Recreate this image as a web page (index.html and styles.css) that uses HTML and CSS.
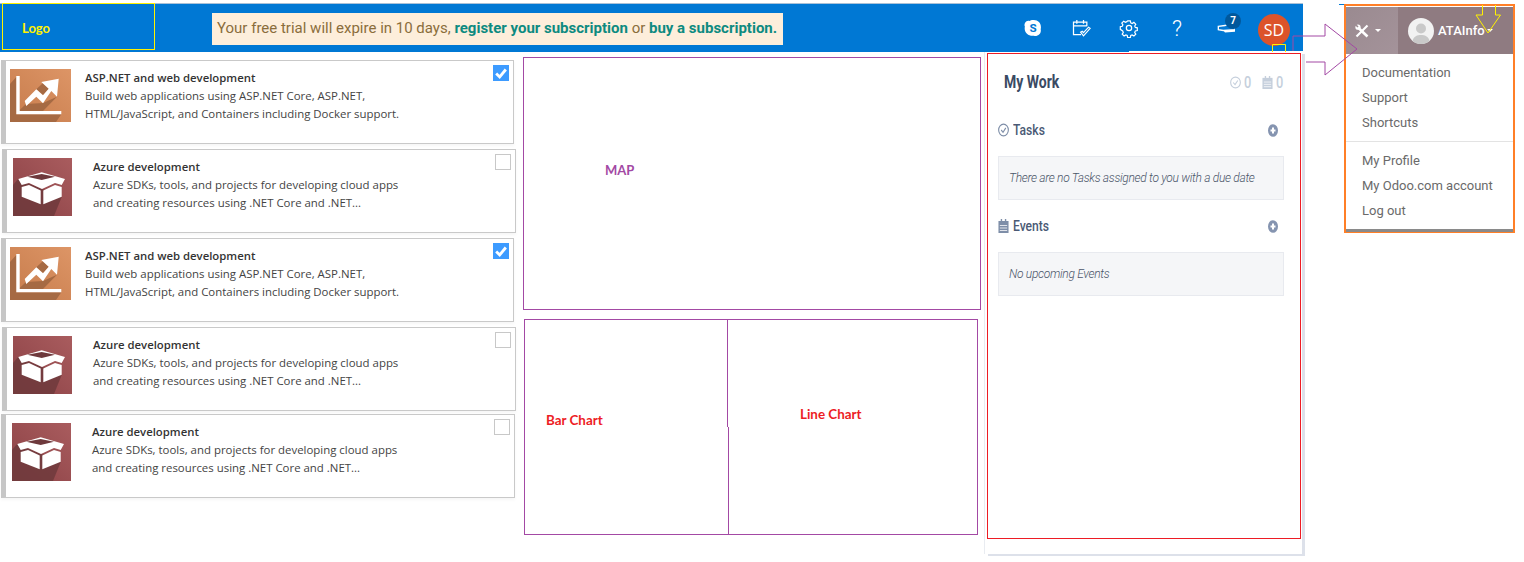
FILE: index.html
```html
<!DOCTYPE html>
<html lang="en">
<head>
<meta charset="utf-8">
<title>Dashboard mockup</title>
<link rel="stylesheet" href="styles.css">
</head>
<body>
<svg class="defs" width="0" height="0" aria-hidden="true">
  <defs>
    <linearGradient id="orangeTile" x1="1" y1="0" x2="0" y2="1">
      <stop offset="0" stop-color="#dd9566"/><stop offset="1" stop-color="#c67b4b"/>
    </linearGradient>
    <linearGradient id="redTile" x1="1" y1="0" x2="0" y2="1">
      <stop offset="0" stop-color="#a95c5e"/><stop offset="1" stop-color="#8b4145"/>
    </linearGradient>
    <symbol id="chartTile" viewBox="0 0 61 53">
      <rect width="61" height="53" fill="url(#orangeTile)"/>
      <path d="M6.300 8L0 15V53H46L51.300 45.300H6.300z" fill="#a66a43"/>
      <path d="M9.700 42V41L16 35L33 34L47 27.700L33 42z" fill="#a66a43"/>
      <path d="M26.300 20.300L33 14L38.700 19.700L33 26.300z" fill="#a66a43"/>
      <path d="M6.300 7H9.700V42H51.300V45.300H6.300z" fill="#fff"/>
      <path d="M16.300 37L14.700 32L26.300 20.300L33 26.300L38.700 19.700L31.300 13L48.700 9.700L47 27.700L41.300 22L33 34.300L26.300 27.700z" fill="#fff"/>
    </symbol>
    <symbol id="boxTile" viewBox="0 0 59 58">
      <rect width="59" height="58" fill="url(#redTile)"/>
      <path d="M5 21L0 27V58H41L48.700 39z" fill="#6e393c" opacity=".85"/>
      <path d="M5.300 21L28.700 14.300L52 21L48.700 27L42 25L29 31L16 25L8.700 27z" fill="#fff"/>
      <path d="M14.300 18.700L28.700 16L42 18.700L28.700 22z" fill="#6e393c"/>
      <path d="M8.700 29L16 27L27.700 32.500V46.300L8.700 38.700z" fill="#fff"/>
      <path d="M48.700 29L42 27L30.300 32.500V46.300L48.700 38.700z" fill="#fff"/>
    </symbol>
  </defs>
</svg>

<div class="page">
  <div class="main">
    <header class="topbar">
      <div class="logo">Logo</div>
      <div class="trial">Your free trial will expire in 10 days, <a class="trial-link">register your subscription</a> or <a class="trial-link">buy a subscription.</a></div>
      <nav class="tray">
        <svg class="tray-icon" viewBox="0 0 24 24">
          <path d="M8 3.500c1-.8 2-1 3-1h2c5 0 8.500 3.500 8.500 8.500 0 1 0 1.500-.3 2.300 1 3.700-1.200 7.700-5.200 8.200-1.500.2-2 0-3-.3-5.500 1-11-3-11-8.700 0-1 0-1.500.3-2C.5 6.500 4 2 8 3.500z" fill="#fff"/>
          <text class="skype-s" x="12" y="17">S</text>
        </svg>
        <svg class="tray-icon" viewBox="0 0 24 24" fill="none" stroke="#fff" stroke-width="1.500">
          <path d="M12 20H3V5h16v5M3 9.500h16M7 2.500v4.500M15 2.500v4.500"/>
          <path d="M11.500 17l3.500 4.500 8-9-2-1.500-6 6.500-1.500-1.500z" stroke-width="1.400"/>
        </svg>
        <svg class="tray-icon" viewBox="0 0 24 24" fill="none" stroke="#fff" stroke-width="1.500">
          <circle cx="12" cy="12" r="3.200"/>
          <path d="M10.300 3h3.400l.5 2.500 1.800.8 2.200-1.400 2.400 2.400-1.400 2.200.8 1.800 2.500.5v3.400l-2.500.5-.8 1.800 1.400 2.200-2.400 2.400-2.200-1.400-1.800.8-.5 2.500h-3.400l-.5-2.500-1.800-.8-2.200 1.400-2.400-2.400 1.400-2.200-.8-1.800L1 13.700v-3.400l2.500-.5.8-1.800-1.400-2.200 2.400-2.400 2.200 1.400 1.800-.8z" transform="translate(.6 .6) scale(.95)"/>
        </svg>
        <span class="tray-help">?</span>
        <span class="tray-notice">
          <svg class="tray-icon" viewBox="0 0 24 24" fill="none" stroke="#fff" stroke-width="1.600">
            <path d="M4 10L12 9L24 4V14L10 15L4 14z"/>
            <path d="M10 15L12 17.400L24 16.500V14z" fill="#fff" stroke="none"/>
          </svg>
          <span class="badge">7</span>
        </span>
        <span class="avatar">SD</span>
      </nav>
    </header>

    <div class="content">
      <section class="cards">
        <article class="card card-a">
          <svg class="tile tile-chart"><use href="#chartTile"/></svg>
          <div class="card-text text-chart">
            <h3 class="card-title">ASP.NET and web development</h3>
            <p class="card-desc">Build web applications using ASP.NET Core, ASP.NET,<br>HTML/JavaScript, and Containers including Docker support.</p>
          </div>
          <span class="check check-on"><svg viewBox="0 0 16 16"><path d="M2.500 8.500l4 4L13.500 4" fill="none" stroke="#fff" stroke-width="3.200"/></svg></span>
        </article>
        <article class="card card-b">
          <svg class="tile tile-box"><use href="#boxTile"/></svg>
          <div class="card-text text-box">
            <h3 class="card-title">Azure development</h3>
            <p class="card-desc">Azure SDKs, tools, and projects for developing cloud apps<br>and creating resources using .NET Core and .NET...</p>
          </div>
          <span class="check"></span>
        </article>
        <article class="card card-a">
          <svg class="tile tile-chart"><use href="#chartTile"/></svg>
          <div class="card-text text-chart">
            <h3 class="card-title">ASP.NET and web development</h3>
            <p class="card-desc">Build web applications using ASP.NET Core, ASP.NET,<br>HTML/JavaScript, and Containers including Docker support.</p>
          </div>
          <span class="check check-on"><svg viewBox="0 0 16 16"><path d="M2.500 8.500l4 4L13.500 4" fill="none" stroke="#fff" stroke-width="3.200"/></svg></span>
        </article>
        <article class="card card-b">
          <svg class="tile tile-box"><use href="#boxTile"/></svg>
          <div class="card-text text-box">
            <h3 class="card-title">Azure development</h3>
            <p class="card-desc">Azure SDKs, tools, and projects for developing cloud apps<br>and creating resources using .NET Core and .NET...</p>
          </div>
          <span class="check"></span>
        </article>
        <article class="card card-c">
          <svg class="tile tile-box"><use href="#boxTile"/></svg>
          <div class="card-text text-box">
            <h3 class="card-title">Azure development</h3>
            <p class="card-desc">Azure SDKs, tools, and projects for developing cloud apps<br>and creating resources using .NET Core and .NET...</p>
          </div>
          <span class="check"></span>
        </article>
      </section>

      <section class="centre">
        <div class="map"><span class="map-label">MAP</span></div>
        <div class="charts">
          <div class="chart-bar"><span class="bar-label">Bar Chart</span></div>
          <div class="chart-line"><span class="line-label">Line Chart</span></div>
        </div>
      </section>

      <aside class="work-panel">
        <div class="work-frame">
          <div class="work-head">
            <h2 class="work-title">My Work</h2>
            <div class="work-counts">
              <svg class="count-icon" viewBox="0 0 12 14" preserveAspectRatio="none" fill="none" stroke="#c5cfdc" stroke-width="1.200"><ellipse cx="6" cy="7" rx="5.300" ry="5.800"/><path d="M3.500 7l2 2.300 3-4.500"/></svg>
              <span class="count">0</span>
              <svg class="count-icon count-gap" viewBox="0 0 12 14" preserveAspectRatio="none"><path d="M0.500 2h11v12H0.500z" fill="#c5cfdc"/><path d="M3 0h1.500V3H3zM7.500 0H9V3H7.500z" fill="#c5cfdc"/><path d="M2 6.500h8M2 9h8M2 11.500h8" stroke="#fff" stroke-width=".8"/></svg>
              <span class="count">0</span>
            </div>
          </div>
          <div class="work-section work-tasks">
            <svg class="sec-icon" viewBox="0 0 12 14" preserveAspectRatio="none" fill="none" stroke="#7e8ea8" stroke-width="1.200"><ellipse cx="6" cy="7" rx="5.300" ry="5.800"/><path d="M3.500 7l2 2.300 3-4.500"/></svg>
            <h3 class="sec-title">Tasks</h3>
            <svg class="sec-add" viewBox="0 0 10 13" preserveAspectRatio="none"><ellipse cx="5" cy="6.500" rx="5" ry="6.300" fill="#8594b0"/><path d="M5 3.500v6M2.500 6.500h5" stroke="#fff" stroke-width="2"/></svg>
          </div>
          <div class="work-empty">There are no Tasks assigned to you with a due date</div>
          <div class="work-section work-events">
            <svg class="sec-icon" viewBox="0 0 12 14" preserveAspectRatio="none"><path d="M0.500 2h11v12H0.500z" fill="#7e8ea8"/><path d="M3 0h1.500V3H3zM7.500 0H9V3H7.500z" fill="#7e8ea8"/><path d="M2 6.500h8M2 9h8M2 11.500h8" stroke="#fff" stroke-width=".8"/></svg>
            <h3 class="sec-title">Events</h3>
            <svg class="sec-add" viewBox="0 0 10 13" preserveAspectRatio="none"><ellipse cx="5" cy="6.500" rx="5" ry="6.300" fill="#8594b0"/><path d="M5 3.500v6M2.500 6.500h5" stroke="#fff" stroke-width="2"/></svg>
          </div>
          <div class="work-empty">No upcoming Events</div>
        </div>
      </aside>
    </div>
  </div>

  <aside class="user-menu">
    <div class="menu-head">
      <div class="menu-tools">
        <svg class="tools-icon" viewBox="0 0 14 14" fill="none" stroke="#fff">
          <path d="M3.500 4L12.500 12.500" stroke-width="2.600"/>
          <path d="M12.500 1.500L1.500 12.500" stroke-width="2.200"/>
          <circle cx="3" cy="3.200" r="2.600" fill="#fff" stroke="none"/>
          <path d="M0.500 0.500L3 3" stroke="#9b8b91" stroke-width="1.600"/>
        </svg>
        <span class="caret"></span>
      </div>
      <div class="menu-user">
        <svg class="user-pic" viewBox="0 0 26 26">
          <circle cx="13" cy="13" r="13" fill="#f2f2f2"/>
          <circle cx="13" cy="10.500" r="5" fill="#c9c9c9"/>
          <path d="M4.500 23c1-5 5-6 8.500-6s7.500 1 8.500 6a13 13 0 0 1-17 0z" fill="#c9c9c9"/>
        </svg>
        <span class="user-name">ATAInfo</span>
        <span class="caret"></span>
      </div>
    </div>
    <ul class="menu-list">
      <li>Documentation</li>
      <li>Support</li>
      <li>Shortcuts</li>
    </ul>
    <ul class="menu-list menu-list-last">
      <li>My Profile</li>
      <li>My Odoo.com account</li>
      <li>Log out</li>
    </ul>
  </aside>
</div>

<svg class="annotations" viewBox="0 0 1524 562" fill="none" aria-hidden="true">
  <rect x="1129" y="51" width="174" height="1" fill="#fff"/>
  <path d="M1293 51V36H1325V24L1357 49L1325 75V62H1306" stroke="#a349a4" stroke-width="1"/>
  <path d="M1272.500 52V44.500H1285.500V52" stroke="#fff200" stroke-width="1"/>
  <path d="M1482.500 5V15H1476L1488 33L1500.500 15H1495.500V5" stroke="#fff200" stroke-width="1"/>
  <path d="M1339 4.500H1344" stroke="#0078d4" stroke-width="1"/>
</svg>
</body>
</html>
```
FILE: styles.css
```css
* { box-sizing: border-box; }
html, body { margin: 0; padding: 0; }
body {
  position: relative;
  width: 1524px;
  height: 562px;
  overflow: hidden;
  background: #fff;
  font-family: Roboto, "Liberation Sans", sans-serif;
}
.defs { position: absolute; }
.page { display: flex; align-items: flex-start; }
.main { width: 1303px; margin-top: 3px; }

/* top bar */
.topbar {
  height: 49px;
  display: flex;
  align-items: flex-start;
  background: #0078d4;
  border-top: 1px solid #a9c1d8;
}
.logo {
  width: 153px;
  height: 47px;
  margin-left: 2px;
  margin-top: -1px;
  padding: 16px 0 0 19px;
  border: 1px solid #fff200;
  color: #fff200;
  font: 700 13px/16px Lato, sans-serif;
}
.trial {
  margin: 9px 0 0 57px;
  width: 571px;
  height: 32px;
  padding-left: 5px;
  background: #fdeedb;
  color: #8a6d3b;
  font-size: 15px;
  line-height: 31px;
  white-space: nowrap;
}
.trial-link { color: #0d8a80; font-weight: 700; }
.tray {
  margin-left: auto;
  display: flex;
  align-items: center;
  height: 48px;
  width: 280px;
}
.tray-icon { width: 20px; height: 20px; flex: none; display: block; }
.tray > .tray-icon { margin-right: 28px; }
.skype-s { fill: #0078d4; font: 700 14px Roboto, sans-serif; text-anchor: middle; }
.tray-help {
  width: 20px;
  margin-right: 28px;
  color: #fff;
  font-size: 22px;
  font-weight: 300;
  text-align: center;
}
.tray-notice { position: relative; width: 20px; margin-right: 23px; }
.badge {
  position: absolute;
  left: 10px;
  top: -5px;
  width: 16px;
  height: 16px;
  border-radius: 50%;
  background: #00589c;
  color: #fff;
  font-size: 10px;
  font-weight: 700;
  line-height: 16px;
  text-align: center;
}
.avatar {
  width: 32px;
  height: 32px;
  margin-top: 4px;
  border-radius: 50%;
  background: #dc532a;
  color: #fff;
  font: 400 16px/32px "Open Sans", sans-serif;
  text-align: center;
}

/* layout row */
.content { display: flex; align-items: flex-start; }
.cards {
  width: 523px;
  display: flex;
  flex-direction: column;
  gap: 5px;
  padding-top: 8px;
}
.centre { width: 462px; padding-top: 5px; }
.work-panel {
  width: 317px;
  height: 502px;
  padding: 1px 1px 0 2px;
  background: #fff;
  box-shadow: 3px 2px 0 #dde1ea, -1px 0 0 #e9ecf1;
}

/* cards */
.card {
  display: flex;
  align-items: flex-start;
  height: 84px;
  background: #fff;
  border: 1px solid #c9c9c9;
  border-left: 5px solid #c6c6c6;
  box-shadow: 0 2px 3px rgba(0, 0, 0, .04);
}
.card-a { width: 513px; margin-left: 1px; padding: 8px 0 0 4px; }
.card-b { width: 514px; margin-left: 2px; padding: 8px 0 0 6px; }
.card-c { width: 514px; margin-left: 1px; margin-top: -2px; padding: 8px 0 0 6px; }
.tile { display: block; flex: none; }
.tile-chart { width: 61px; height: 53px; }
.tile-box { width: 59px; height: 58px; }
.card-text { flex: none; }
.text-chart { width: 400px; margin-left: 14px; }
.text-box { width: 400px; margin-left: 21px; }
.card-title {
  margin: 0;
  color: #333;
  font: 600 11.35px/18px "Open Sans", sans-serif;
}
.card-desc {
  margin: 0;
  color: #444;
  font: 400 11.43px/18px "Open Sans", sans-serif;
}
.check {
  flex: none;
  width: 16px;
  height: 16px;
  margin: -4px 4px 0 auto;
  border: 1px solid #c8c8c8;
}
.check-on { background: #3d9bff; border-color: #3d9bff; }
.check-on svg { display: block; width: 14px; height: 14px; }

/* centre canvas */
.map {
  width: 458px;
  height: 253px;
  padding: 102px 0 0 81px;
  border: 1px solid #a349a4;
}
.map-label { color: #a349a4; font: 700 13px/16px Lato, sans-serif; }
.charts {
  position: relative;
  display: flex;
  width: 454px;
  height: 216px;
  margin: 9px 0 0 1px;
  border: 1px solid #a349a4;
}
.chart-bar {
  width: 203px;
  padding: 92px 0 0 21px;
  color: #ed1c24;
  font: 700 13.4px/16px Lato, sans-serif;
}
.chart-bar::before,
.chart-bar::after {
  content: "";
  position: absolute;
  width: 1px;
  background: #a349a4;
}
.chart-bar::before { left: 202px; top: 0; height: 107px; }
.chart-bar::after { left: 203px; top: 107px; bottom: 0; }
.chart-line {
  flex: 1;
  padding: 86px 0 0 72px;
  color: #ed1c24;
  font: 700 13.4px/16px Lato, sans-serif;
}

/* my work */
.work-frame {
  height: 486px;
  padding: 0 16px 0 10px;
  border: 1px solid #ed1c24;
}
.work-head {
  display: flex;
  align-items: center;
  justify-content: space-between;
  height: 56px;
  padding: 0 1px 0 6px;
}
.work-title {
  margin: 0;
  color: #3a4a63;
  font-size: 17.5px;
  font-weight: 700;
  transform: scaleX(.8);
  transform-origin: left center;
}
.work-counts { display: flex; align-items: center; }
.count-icon { width: 11px; height: 13px; margin-right: 3px; }
.count-gap { margin-left: 11px; }
.count {
  width: 7px;
  color: #c5cfdc;
  font-size: 16px;
  font-weight: 500;
  transform: scaleX(.8);
  transform-origin: left center;
}
.work-section { display: flex; align-items: center; height: 20px; }
.work-tasks { margin-top: 10px; }
.work-events { margin-top: 16px; }
.sec-icon { width: 11px; height: 14px; margin-right: 4px; flex: none; }
.sec-title {
  margin: 0;
  color: #4a5a75;
  font-size: 15.5px;
  font-weight: 500;
  transform: scaleX(.78);
  transform-origin: left center;
}
.sec-add { width: 10px; height: 13px; margin-left: auto; margin-right: 6px; }
.work-empty {
  width: 286px;
  height: 44px;
  margin-top: 16px;
  padding-left: 10px;
  background: #f5f6f8;
  border: 1px solid #e8eaef;
  color: #4a5568;
  font-size: 12px;
  font-style: italic;
  font-weight: 300;
  letter-spacing: -.3px;
  line-height: 42px;
}

/* user menu */
.user-menu {
  width: 171px;
  height: 229px;
  margin: 4px 0 0 41px;
  border: 2px solid #ff7f27;
  border-bottom-width: 1px;
  background: #fff;
  box-shadow: inset 0 -3px 0 #8a8a8a;
}
.menu-head { display: flex; height: 47px; margin-top: 1px; }
.menu-tools {
  display: flex;
  align-items: center;
  width: 52px;
  padding-left: 9px;
  background: linear-gradient(135deg, #9a8a90, #a4939a);
}
.tools-icon { width: 14px; height: 14px; margin-right: 6px; }
.menu-user {
  flex: 1;
  display: flex;
  align-items: center;
  padding-left: 10px;
  background: #8f7b81;
  color: #fff;
}
.user-pic { width: 26px; height: 26px; margin-right: 4px; }
.user-name { font-size: 13px; font-weight: 500; margin-right: 2px; }
.caret {
  width: 0;
  height: 0;
  border-left: 3.5px solid transparent;
  border-right: 3.5px solid transparent;
  border-top: 3.5px solid #fff;
}
.menu-list {
  list-style: none;
  margin: 0;
  padding: 6px 0 6px 16px;
  border-bottom: 1px solid #e3e3e3;
  color: #6a6a6a;
  font-size: 13px;
  line-height: 25px;
}
.menu-list-last { border-bottom: 0; }

/* hand-drawn markup over the screenshot */
.annotations {
  position: absolute;
  left: 0;
  top: 0;
  width: 1524px;
  height: 562px;
  pointer-events: none;
}
```
